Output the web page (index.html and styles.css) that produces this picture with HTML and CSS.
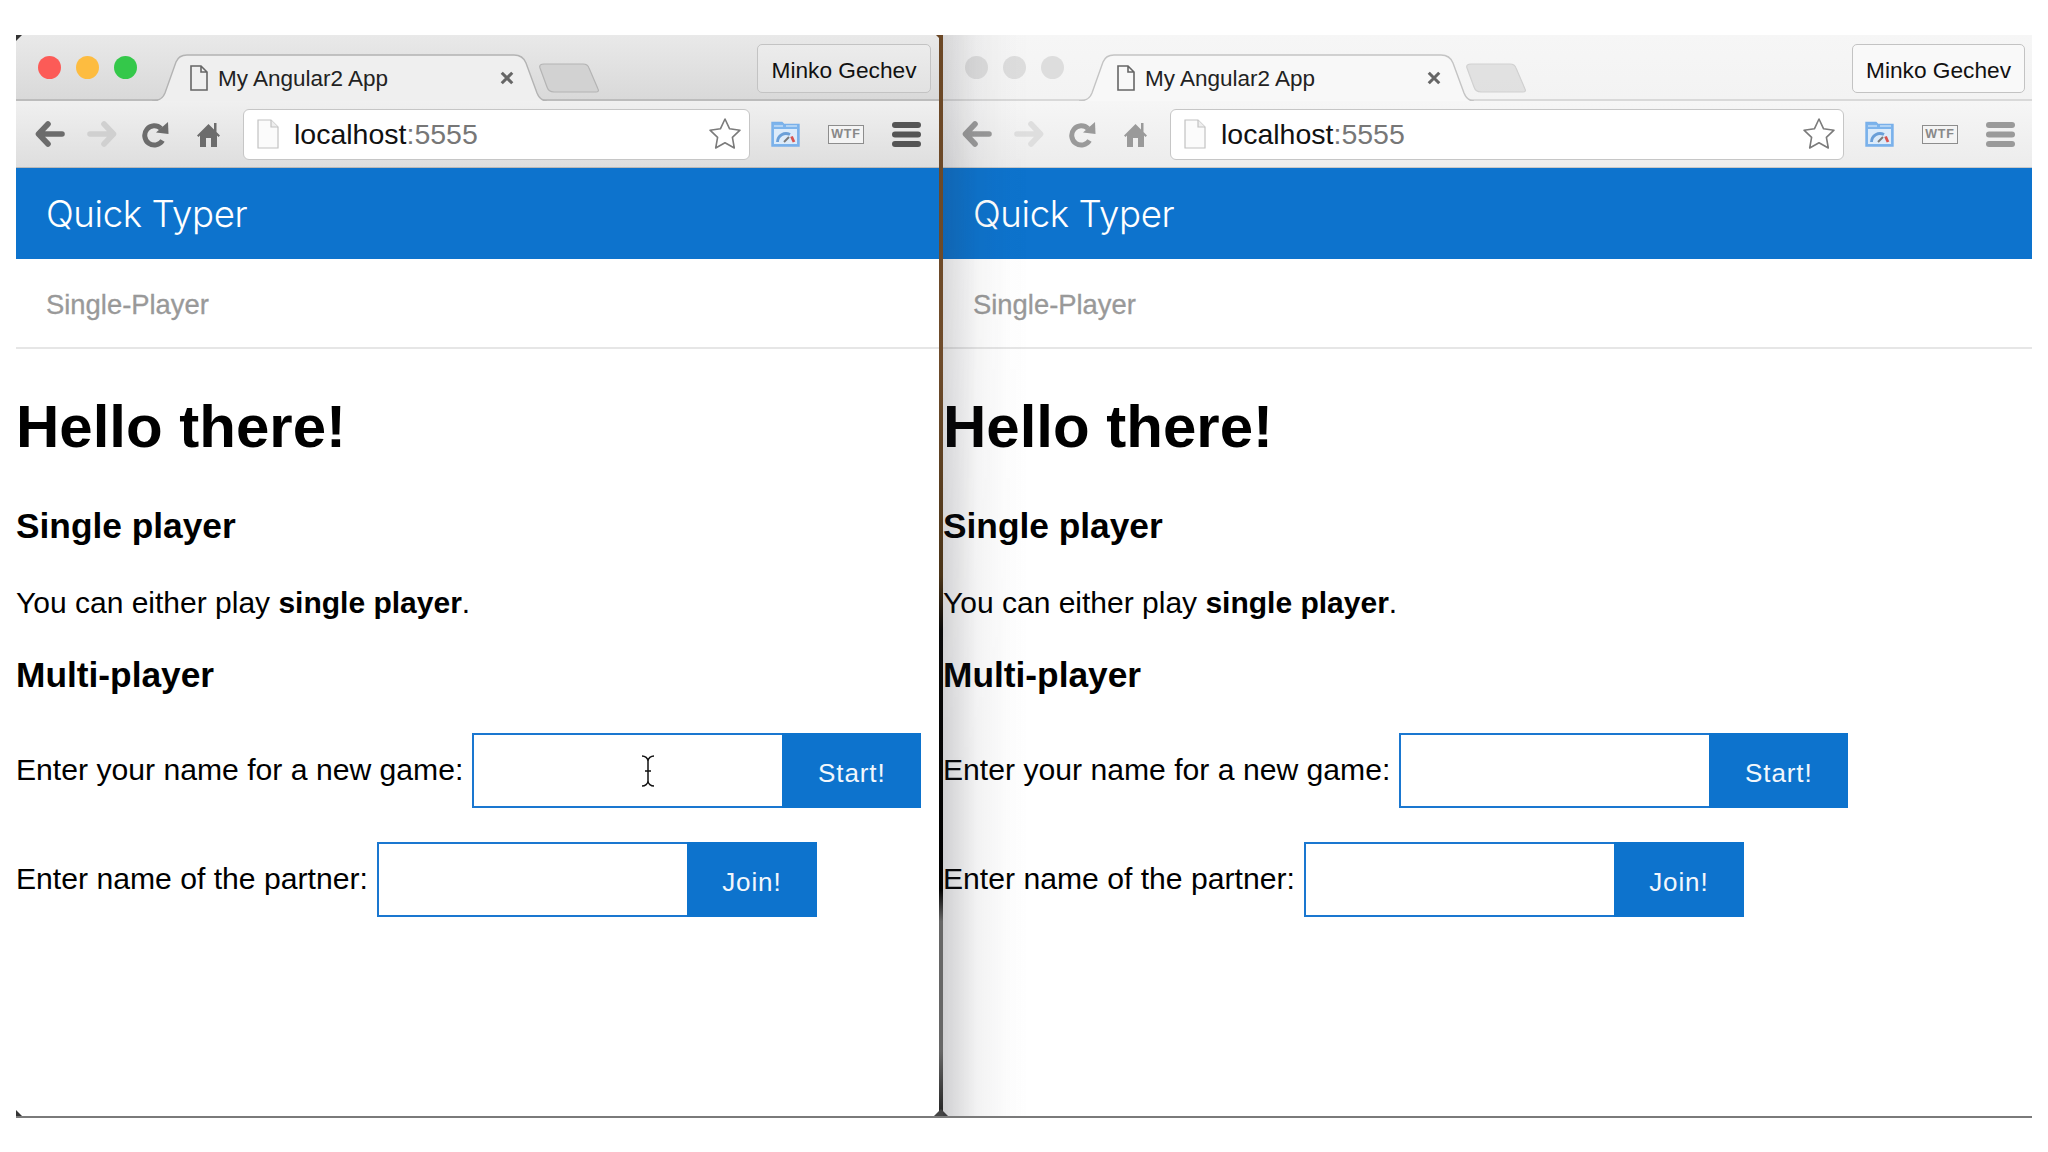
FILE: index.html
```html
<!DOCTYPE html>
<html lang="en">
  <head>
    <meta charset="UTF-8" />
    <title>Quick Typer</title>
    <link rel="stylesheet" href="styles.css">
  </head>
  <body>
    <svg class="sprites" width="0" height="0">
      <symbol id="i-doc" viewBox="0 0 18 26">
        <path d="M1 1H11L17 7V25H1Z M11 1V7H17" fill="none" stroke="currentColor" stroke-width="1.6"/>
      </symbol>
      <symbol id="i-close" viewBox="0 0 12 12">
        <path d="M1.5 1.5L10.5 10.5M10.5 1.5L1.5 10.5" fill="none" stroke="currentColor" stroke-width="2.6"/>
      </symbol>
      <symbol id="i-newtab" viewBox="0 0 60 30">
        <path d="M1 5C0 2 2 1 5 1H44C47 1 49 2 50 5L59 26C60 28 59 29 57 29H15C11 29 9 27 8 24Z" fill="#d2d2d2" stroke="#b4b4b4" stroke-width="1.2"/>
      </symbol>
      <symbol id="i-back" viewBox="0 0 30 26">
        <path d="M13 3L3.5 13L13 23M4 13H27" fill="none" stroke="currentColor" stroke-width="5.6" stroke-linecap="round" stroke-linejoin="round"/>
      </symbol>
      <symbol id="i-forward" viewBox="0 0 30 26">
        <path d="M17 3L26.5 13L17 23M26 13H3" fill="none" stroke="currentColor" stroke-width="5.6" stroke-linecap="round" stroke-linejoin="round"/>
      </symbol>
      <symbol id="i-reload" viewBox="0 0 27 27">
        <path d="M20.5 19.5A9.6 9.6 0 1 1 19 7.5" fill="none" stroke="currentColor" stroke-width="5"/>
        <path d="M14 11.5L26.5 13L26 1Z" fill="currentColor"/>
      </symbol>
      <symbol id="i-home" viewBox="0 0 23 26">
        <path d="M11.5 3L0 14.5L1.5 16L3 14.5V26H9V17H14V26H20V14.5L21.5 16L23 14.5L19.5 11V2H17V8.5Z" fill="currentColor"/>
      </symbol>
      <symbol id="i-page" viewBox="0 0 22 30">
        <path d="M1 1H14L21 8V29H1Z" fill="#fbfbfb" stroke="#c2c2c2" stroke-width="1.2"/>
        <path d="M14 1V8H21" fill="#eee" stroke="#c2c2c2" stroke-width="1.2"/>
      </symbol>
      <symbol id="i-star" viewBox="0 0 34 33">
        <path d="M17 2L21.6 11.8L32 13.2L24.4 20.4L26.3 31L17 25.8L7.7 31L9.6 20.4L2 13.2L12.4 11.8Z" fill="#fff" stroke="#7b7b7b" stroke-width="1.6" stroke-linejoin="round"/>
      </symbol>
      <symbol id="i-speed" viewBox="0 0 29 26">
        <path d="M1 1.5H11L13 3.5H28V25H1Z" fill="#7db4ec" stroke="#79b0ea" stroke-width="1.4"/>
        <path d="M3 5H12M15 5H26" stroke="#e8f2fc" stroke-width="1"/>
        <rect x="3" y="8" width="23" height="15" fill="#dcebfa"/>
        <path d="M6.5 21A8.5 8.5 0 0 1 19 13.6" fill="none" stroke="#6a9fd8" stroke-width="2.8"/>
        <path d="M13 21L18 16" stroke="#7a7a7a" stroke-width="2"/>
        <path d="M20.5 15.5L23 21" stroke="#d9534f" stroke-width="2.8"/>
      </symbol>
      <symbol id="i-menu" viewBox="0 0 29 25">
        <rect y="0" width="29" height="6" rx="3" fill="currentColor"/>
        <rect y="9.5" width="29" height="6" rx="3" fill="currentColor"/>
        <rect y="19" width="29" height="6" rx="3" fill="currentColor"/>
      </symbol>
      <symbol id="i-ibeam" viewBox="0 0 14 32">
        <path d="M1 1C4 1 7 3 7 6V26C7 29 4 31 1 31M13 1C10 1 7 3 7 6V26C7 29 10 31 13 31M4 16H10" fill="none" stroke="#111" stroke-width="1.5"/>
      </symbol>
    </svg>

    <div class="screen">
      <!-- ventana izquierda, la activa -->
      <section class="window window-left">
        <header class="tabstrip">
          <div class="dots">
            <span class="dot dot-red"></span>
            <span class="dot dot-yellow"></span>
            <span class="dot dot-green"></span>
          </div>
          <div class="tab">
            <svg class="tab-shape" viewBox="0 0 395 47" preserveAspectRatio="none">
              <path d="M0 47C8 47 11 44 13 39L24 8C26 3 29 1 35 1H362C369 1 372 4 374 9L385 39C387 44 390 47 395 47Z" fill="#efefef"/>
              <path d="M0 47C8 47 11 44 13 39L24 8C26 3 29 1 35 1H362C369 1 372 4 374 9L385 39C387 44 390 47 395 47" fill="none" stroke="#b3b3b3" stroke-width="1.4"/>
            </svg>
            <svg class="tab-doc"><use href="#i-doc"/></svg>
            <span class="tab-title">My Angular2 App</span>
            <svg class="tab-close"><use href="#i-close"/></svg>
          </div>
          <svg class="newtab"><use href="#i-newtab"/></svg>
          <div class="profile">Minko Gechev</div>
        </header>
        <div class="toolbar">
          <svg class="tool tool-back"><use href="#i-back"/></svg>
          <svg class="tool tool-forward"><use href="#i-forward"/></svg>
          <svg class="tool tool-reload"><use href="#i-reload"/></svg>
          <svg class="tool tool-home"><use href="#i-home"/></svg>
          <div class="urlbar">
            <svg class="url-page"><use href="#i-page"/></svg>
            <span class="url-text">localhost<span class="url-port">:5555</span></span>
            <svg class="url-star"><use href="#i-star"/></svg>
          </div>
          <svg class="ext ext-speed"><use href="#i-speed"/></svg>
          <span class="ext-wtf">WTF</span>
          <svg class="tool tool-menu"><use href="#i-menu"/></svg>
        </div>
        <div class="brandbar">Quick Typer</div>
        <nav class="subnav"><a class="subnav-link">Single-Player</a></nav>
        <main class="content">
          <h1>Hello there!</h1>
          <h2>Single player</h2>
          <p>You can either play <b>single player</b>.</p>
          <h2 class="multi">Multi-player</h2>
          <div class="field">
            <label class="field-label">Enter your name for a new game:</label>
            <div class="input-wrap">
              <input class="field-input" type="text" />
              <svg class="ibeam"><use href="#i-ibeam"/></svg>
            </div>
            <button class="btn btn-start">Start!</button>
          </div>
          <div class="field">
            <label class="field-label">Enter name of the partner:</label>
            <div class="input-wrap">
              <input class="field-input" type="text" />
            </div>
            <button class="btn btn-join">Join!</button>
          </div>
        </main>
      </section>

      <div class="divider"></div>

      <!-- ventana derecha, sin foco -->
      <section class="window window-right">
        <header class="tabstrip">
          <div class="dots">
            <span class="dot"></span>
            <span class="dot"></span>
            <span class="dot"></span>
          </div>
          <div class="tab">
            <svg class="tab-shape" viewBox="0 0 395 47" preserveAspectRatio="none">
              <path d="M0 47C8 47 11 44 13 39L24 8C26 3 29 1 35 1H362C369 1 372 4 374 9L385 39C387 44 390 47 395 47Z" fill="#f8f8f8"/>
              <path d="M0 47C8 47 11 44 13 39L24 8C26 3 29 1 35 1H362C369 1 372 4 374 9L385 39C387 44 390 47 395 47" fill="none" stroke="#c4c4c4" stroke-width="1.4"/>
            </svg>
            <svg class="tab-doc"><use href="#i-doc"/></svg>
            <span class="tab-title">My Angular2 App</span>
            <svg class="tab-close"><use href="#i-close"/></svg>
          </div>
          <svg class="newtab"><use href="#i-newtab"/></svg>
          <div class="profile">Minko Gechev</div>
        </header>
        <div class="toolbar">
          <svg class="tool tool-back"><use href="#i-back"/></svg>
          <svg class="tool tool-forward"><use href="#i-forward"/></svg>
          <svg class="tool tool-reload"><use href="#i-reload"/></svg>
          <svg class="tool tool-home"><use href="#i-home"/></svg>
          <div class="urlbar">
            <svg class="url-page"><use href="#i-page"/></svg>
            <span class="url-text">localhost<span class="url-port">:5555</span></span>
            <svg class="url-star"><use href="#i-star"/></svg>
          </div>
          <svg class="ext ext-speed"><use href="#i-speed"/></svg>
          <span class="ext-wtf">WTF</span>
          <svg class="tool tool-menu"><use href="#i-menu"/></svg>
        </div>
        <div class="brandbar">Quick Typer</div>
        <nav class="subnav"><a class="subnav-link">Single-Player</a></nav>
        <main class="content">
          <h1>Hello there!</h1>
          <h2>Single player</h2>
          <p>You can either play <b>single player</b>.</p>
          <h2 class="multi">Multi-player</h2>
          <div class="field">
            <label class="field-label">Enter your name for a new game:</label>
            <div class="input-wrap">
              <input class="field-input" type="text" />
            </div>
            <button class="btn btn-start">Start!</button>
          </div>
          <div class="field">
            <label class="field-label">Enter name of the partner:</label>
            <div class="input-wrap">
              <input class="field-input" type="text" />
            </div>
            <button class="btn btn-join">Join!</button>
          </div>
        </main>
      </section>
    </div>
  </body>
</html>
```

FILE: styles.css
```css
* {
  box-sizing: border-box;
}

html,
body {
  height: 100%;
}

body {
  margin: 0;
  background: #fff;
  overflow: hidden;
  font-family: "Liberation Sans", Arial, sans-serif;
  color: #000;
}

.sprites {
  position: absolute;
}

.screen {
  display: flex;
  width: 2016px;
  height: 1083px;
  margin: 35px 0 0 16px;
  border-bottom: 2px solid #7a7a7a;
}

.window {
  position: relative;
  display: flex;
  flex-direction: column;
  min-width: 0;
}

.window-left {
  width: 923px;
}

.window-right {
  width: 1089px;
}

/* esquinas oscuras del video */
.window-left::before {
  content: "";
  position: absolute;
  top: 0;
  left: 0;
  border: 3px solid transparent;
  border-top-color: #333;
  border-left-color: #333;
}

.window-left::after {
  content: "";
  position: absolute;
  bottom: 0;
  left: 0;
  border: 3px solid transparent;
  border-bottom-color: #333;
  border-left-color: #333;
}

/* sombra que cae sobre la ventana derecha */
.window-right::after {
  content: "";
  position: absolute;
  top: 0;
  bottom: 0;
  left: 0;
  width: 86px;
  background: linear-gradient(90deg, rgba(40, 40, 50, 0.22), rgba(40, 40, 50, 0.06) 40%, rgba(40, 40, 50, 0.015) 75%, transparent);
  -webkit-mask-image: linear-gradient(rgba(0, 0, 0, 0.7), #000 70%);
  mask-image: linear-gradient(rgba(0, 0, 0, 0.7), #000 70%);
  pointer-events: none;
}

.divider {
  position: relative;
  width: 4px;
  background: linear-gradient(#6b4725, #6f4c2b 30%, #4a3418 50%, #0a0a0a 55%, #000 79%, #666 82%, #666 94%, #222);
}

.divider::before {
  content: "";
  position: absolute;
  top: 0;
  left: -3px;
  border: 5px solid transparent;
  border-bottom: 0;
  border-top-color: #6b4725;
}

.divider::after {
  content: "";
  position: absolute;
  left: -5px;
  bottom: 0;
  border: 7px solid transparent;
  border-top: 0;
  border-bottom-color: #444;
}

/* barra de pestañas */
.tabstrip {
  display: flex;
  align-items: flex-start;
  flex: none;
  height: 66px;
  border-bottom: 2px solid #bcbcbc;
  background: linear-gradient(#e9e9e9, #d9d9d9);
}

.window-right .tabstrip {
  border-bottom-color: #d9d9d9;
  background: linear-gradient(#f6f6f6, #f3f3f3);
}

.dots {
  display: flex;
  gap: 15px;
  flex: none;
  width: 136px;
  margin-top: 21px;
  padding-left: 22px;
}

.dot {
  width: 23px;
  height: 23px;
  border-radius: 50%;
  background: #dddddd;
}

.dot-red {
  background: #fc5b57;
}

.dot-yellow {
  background: #fdbc40;
}

.dot-green {
  background: #34c84a;
}

.tab {
  position: relative;
  display: flex;
  align-items: center;
  flex: none;
  width: 395px;
  height: 47px;
  margin-top: 19px;
  padding: 0 33px 0 38px;
}

.tab-shape {
  position: absolute;
  top: 0;
  left: 0;
  width: 100%;
  height: 100%;
}

.tab-doc {
  position: relative;
  flex: none;
  width: 18px;
  height: 26px;
  margin-right: 10px;
  color: #666;
}

.tab-title {
  position: relative;
  top: 1px;
  font-size: 22.5px;
  color: #222;
}

.tab-close {
  position: relative;
  flex: none;
  width: 14px;
  height: 14px;
  margin-left: auto;
  color: #666;
}

.newtab {
  flex: none;
  width: 60px;
  height: 30px;
  margin: 28px 0 0 -8px;
}

.window-right .newtab {
  opacity: 0.55;
}

.profile {
  flex: none;
  margin: 9px 8px 0 auto;
  width: 174px;
  height: 49px;
  line-height: 50px;
  text-align: center;
  font-size: 22.7px;
  color: #111;
  border: 1px solid #c3c3c3;
  border-radius: 5px;
  background: linear-gradient(#ececec, #e2e2e2);
}

.window-right .profile {
  width: 173px;
  margin-right: 7px;
  background: #f9f9f9;
}

/* barra de herramientas */
.toolbar {
  display: flex;
  align-items: center;
  flex: none;
  height: 67px;
  padding: 0 18px 0 19px;
  background: linear-gradient(#f0f0f0, #dedede);
  border-bottom: 1px solid #b9b9b9;
}

.window-right .toolbar {
  padding-right: 17px;
  background: linear-gradient(#f6f6f6, #ececec);
  border-bottom-color: #c8c8c8;
}

.tool {
  flex: none;
  color: #6c6c6c;
}

.window-right .tool {
  color: #9a9a9a;
}

.tool-back {
  width: 30px;
  height: 26px;
}

.tool-forward {
  width: 30px;
  height: 26px;
  margin-left: 22px;
  color: #d0d0d0;
}

.window-right .tool-forward {
  color: #dedede;
}

.tool-reload {
  width: 27px;
  height: 27px;
  margin-left: 25px;
}

.tool-home {
  width: 23px;
  height: 26px;
  margin-left: 28px;
}

.urlbar {
  display: flex;
  align-items: center;
  flex: 1;
  height: 51px;
  margin-left: 23px;
  padding: 0 6px 0 13px;
  border: 1px solid #c6c6c6;
  border-radius: 6px;
  background: #fff;
}

.url-page {
  flex: none;
  width: 22px;
  height: 30px;
  margin-right: 15px;
}

.url-text {
  font-size: 28.5px;
  color: #111;
}

.url-port {
  color: #777;
}

.url-star {
  flex: none;
  width: 34px;
  height: 33px;
  margin: -2px 1px 0 auto;
}

.ext-speed {
  flex: none;
  width: 29px;
  height: 26px;
  margin-left: 21px;
}

.ext-wtf {
  flex: none;
  width: 36px;
  height: 19px;
  margin-left: 28px;
  border: 1.5px solid #8d8d8d;
  font-size: 12.5px;
  line-height: 16px;
  font-weight: bold;
  text-align: center;
  letter-spacing: 0.8px;
  color: #888;
  background: #f4f4f4;
}

.tool-menu {
  width: 29px;
  height: 25px;
  margin-left: 28px;
  color: #555;
}

/* la app */
.brandbar {
  flex: none;
  height: 91px;
  padding-left: 30px;
  line-height: 92px;
  font-family: Inter, "Liberation Sans", sans-serif;
  font-weight: 300;
  font-size: 36.6px;
  letter-spacing: -0.4px;
  color: #fff;
  background: #0d73cd;
}

.subnav {
  flex: none;
  height: 90px;
  padding-left: 30px;
  line-height: 92px;
  border-bottom: 2px solid #e6e6e6;
}

.subnav-link {
  font-size: 27.4px;
  color: #999;
  -webkit-text-stroke: 0.3px #999;
}

.content {
  flex: 1;
  padding-top: 45px;
}

h1 {
  margin: 0 0 46px;
  font-size: 60px;
  line-height: 66px;
}

h2 {
  margin: 0 0 39px;
  font-size: 35.3px;
  line-height: 40px;
}

p {
  margin: 0 0 34px;
  font-size: 30px;
  line-height: 36px;
}

.multi {
  margin-bottom: 38px;
}

.field {
  display: flex;
  align-items: center;
  height: 75px;
  margin-bottom: 34px;
}

.field-label {
  margin: 0 9px 1px 0;
  font-size: 30.15px;
  line-height: 36px;
}

.input-wrap {
  position: relative;
  flex: none;
  width: 310px;
  height: 75px;
}

.field-input {
  display: block;
  width: 100%;
  height: 100%;
  padding: 0 12px;
  border: 2px solid #1a77d0;
  border-right: 0;
  border-radius: 0;
  outline: none;
  background: #fff;
}

.ibeam {
  position: absolute;
  top: 22px;
  left: 169px;
  width: 14px;
  height: 32px;
}

.btn {
  flex: none;
  height: 75px;
  padding: 5px 0 0;
  border: 0;
  border-radius: 0;
  font-family: "Liberation Sans", Arial, sans-serif;
  font-size: 26px;
  letter-spacing: 0.9px;
  color: #f2f7fc;
  background: #0d73cd;
}

.btn-start {
  width: 139px;
}

.btn-join {
  width: 130px;
}
```
